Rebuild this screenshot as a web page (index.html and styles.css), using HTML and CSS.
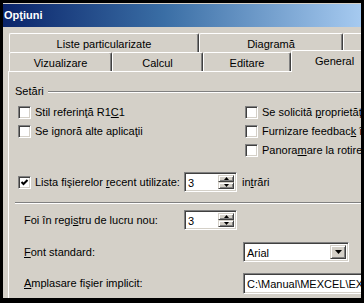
FILE: index.html
```html
<!DOCTYPE html>
<html lang="ro">
<head>
<meta charset="utf-8">
<title>Opţiuni</title>
<link rel="stylesheet" href="styles.css">
</head>
<body>
<div class="window">
  <div class="titlebar">Opţiuni</div>
  <div class="tabs">
    <div class="tabrow">
      <div class="tab w-liste">Liste particularizate</div>
      <div class="tab w-diag">Diagramă</div>
      <div class="tab w-extra"></div>
    </div>
    <div class="tabrow">
      <div class="tab w-viz">Vizualizare</div>
      <div class="tab w-calc">Calcul</div>
      <div class="tab w-edit">Editare</div>
      <div class="tab sel w-gen">General</div>
    </div>
  </div>
  <div class="panel">
    <div class="group">
      <span class="group-label">Setări</span>
      <span class="group-line"></span>
    </div>
    <div class="checks">
      <label class="chk"><span class="box"></span><span>Stil referinţă R1<u>C</u>1</span></label>
      <label class="chk"><span class="box"></span><span>Se solicită <u>p</u>roprietăţi de rezumat</span></label>
      <label class="chk"><span class="box"></span><span>Se i<u>g</u>noră alte aplicaţii</span></label>
      <label class="chk"><span class="box"></span><span>Furnizare feedbac<u>k</u> împreună cu sunet</span></label>
      <span></span>
      <label class="chk"><span class="box"></span><span>Panora<u>m</u>are la rotire cu IntelliMouse</span></label>
    </div>
    <div class="row recent">
      <label class="chk recent-label"><span class="box checked"><svg width="9" height="9" viewBox="0 0 9 9"><path d="M1.5 4 L3.5 6 L7.5 2" fill="none" stroke="#000" stroke-width="2"/></svg></span><span>Lista fişierelor <u>r</u>ecent utilizate:</span></label>
      <div class="spin">
        <span class="spin-val">3</span>
        <span class="spin-btns">
          <span class="sbtn"><svg width="5" height="3" viewBox="0 0 5 3"><path d="M2.5 0 L5 3 L0 3 Z" fill="#000"/></svg></span>
          <span class="sbtn"><svg width="5" height="3" viewBox="0 0 5 3"><path d="M0 0 L5 0 L2.5 3 Z" fill="#000"/></svg></span>
        </span>
      </div>
      <span class="after">in<u>t</u>rări</span>
    </div>
    <div class="separator"></div>
    <div class="row sheets">
      <span class="lbl lbl-foi">Foi în regi<u>s</u>tru de lucru nou:</span>
      <div class="spin">
        <span class="spin-val">3</span>
        <span class="spin-btns">
          <span class="sbtn"><svg width="5" height="3" viewBox="0 0 5 3"><path d="M2.5 0 L5 3 L0 3 Z" fill="#000"/></svg></span>
          <span class="sbtn"><svg width="5" height="3" viewBox="0 0 5 3"><path d="M0 0 L5 0 L2.5 3 Z" fill="#000"/></svg></span>
        </span>
      </div>
    </div>
    <div class="row font">
      <span class="lbl lbl-wide"><u>F</u>ont standard:</span>
      <div class="combo">
        <span class="combo-val">Arial</span>
        <span class="combo-btn"><svg width="7" height="4" viewBox="0 0 7 4"><path d="M0 0 L7 0 L3.5 4 Z" fill="#000"/></svg></span>
      </div>
    </div>
    <div class="row path">
      <span class="lbl lbl-wide"><u>A</u>mplasare fişier implicit:</span>
      <div class="textbox">C:\Manual\MEXCEL\EXEMPLE</div>
    </div>
  </div>
</div>
</body>
</html>
```
FILE: styles.css
```css
* { box-sizing: border-box; }

body {
  margin: 0;
  background: #000;
  font: 11px "Liberation Sans", Arial, sans-serif;
  color: #000;
}

.window {
  margin: 3px 0 0 3px;
  width: 358px;
  height: 295px;
  background: #d4d0c8;
  overflow: hidden;
  white-space: nowrap;
}

.titlebar {
  margin-top: 1px;
  height: 23px;
  line-height: 23px;
  padding-left: 1px;
  background: linear-gradient(to right, #0a246a 0%, #3a6ea5 45%, #a6caf0 100%);
  color: #fff;
  font-weight: bold;
}

.tabs {
  margin-top: 6px;
}

.tabrow {
  display: flex;
  height: 19px;
  padding-left: 6px;
}

.tab {
  flex: none;
  height: 19px;
  padding-top: 2px;
  line-height: 16px;
  text-align: center;
  border-top: 1px solid #fff;
  border-left: 1px solid #fff;
  border-right: 1px solid #404040;
  border-top-left-radius: 2px;
  border-top-right-radius: 2px;
  box-shadow: inset -1px 0 #808080;
  background: #d4d0c8;
}

.w-liste { width: 190px; }
.w-diag { width: 144px; }
.w-extra { width: 60px; }
.w-viz { width: 103px; }
.w-calc { width: 91px; }
.w-edit { width: 88px; }
.w-gen { width: 72px; }

.tab.sel {
  position: relative;
  z-index: 1;
  margin-top: -2px;
  height: 22px;
  padding-top: 2px;
  text-align: left;
  padding-left: 23px;
  box-shadow: none;
  border-right: none;
}

.panel {
  margin-left: 5px;
  width: 360px;
  height: 240px;
  border-top: 1px solid #fff;
  border-left: 1px solid #fff;
  padding-left: 6px;
}

.group {
  display: flex;
  align-items: center;
  margin-top: 13px;
  height: 13px;
  line-height: 13px;
}

.group-line {
  flex: 1;
  height: 2px;
  margin-left: 4px;
  border-top: 1px solid #808080;
  border-bottom: 1px solid #fff;
}

.checks {
  display: grid;
  grid-template-columns: 227px auto;
  grid-auto-rows: 19px;
  margin-top: 5px;
  padding-left: 3px;
}

.chk {
  display: flex;
  align-items: center;
  gap: 4px;
  line-height: 13px;
}

.box {
  flex: none;
  width: 13px;
  height: 13px;
  background: #fff;
  border: 1px solid;
  border-color: #808080 #fff #fff #808080;
  box-shadow: inset 1px 1px #404040, inset -1px -1px #d4d0c8;
  display: flex;
  align-items: center;
  justify-content: center;
}

.row {
  display: flex;
  align-items: center;
  height: 20px;
  line-height: 13px;
}

.recent {
  margin-top: 12px;
  padding-left: 3px;
}

.recent-label { flex: none; width: 166px; }

.spin {
  flex: none;
  display: flex;
  width: 53px;
  height: 20px;
  background: #fff;
  border: 1px solid;
  border-color: #808080 #fff #fff #808080;
  box-shadow: inset 1px 1px #404040, inset -1px -1px #d4d0c8;
  padding: 2px;
}

.spin-val {
  flex: 1;
  padding-left: 1px;
  line-height: 16px;
}

.spin-btns {
  display: flex;
  flex-direction: column;
  width: 16px;
}

.sbtn {
  height: 8px;
  display: flex;
  align-items: center;
  justify-content: center;
  background: #d4d0c8;
  border: 1px solid;
  border-color: #d4d0c8 #404040 #404040 #d4d0c8;
  box-shadow: inset 1px 1px #fff, inset -1px -1px #808080;
}

.after { margin-left: 5px; }

.separator {
  margin-top: 10px;
  height: 2px;
  border-top: 1px solid #808080;
  border-bottom: 1px solid #fff;
}

.sheets { margin-top: 6px; }

.lbl { flex: none; padding-left: 9px; }
.lbl-foi { width: 169px; }
.lbl-wide { width: 228px; }

.font { margin-top: 12px; }

.combo {
  flex: none;
  display: flex;
  align-items: stretch;
  width: 106px;
  height: 20px;
  background: #fff;
  border: 1px solid;
  border-color: #808080 #fff #fff #808080;
  box-shadow: inset 1px 1px #404040, inset -1px -1px #d4d0c8;
  padding: 2px;
}

.combo-val {
  flex: 1;
  padding-left: 1px;
  line-height: 16px;
}

.combo-btn {
  width: 16px;
  display: flex;
  align-items: center;
  justify-content: center;
  background: #d4d0c8;
  border: 1px solid;
  border-color: #d4d0c8 #404040 #404040 #d4d0c8;
  box-shadow: inset 1px 1px #fff, inset -1px -1px #808080;
}

.path { margin-top: 11px; height: 21px; }

.textbox {
  flex: none;
  width: 140px;
  height: 21px;
  background: #fff;
  border: 1px solid;
  border-color: #808080 #fff #fff #808080;
  box-shadow: inset 1px 1px #404040, inset -1px -1px #d4d0c8;
  padding: 2px 3px;
  line-height: 16px;
}
```
